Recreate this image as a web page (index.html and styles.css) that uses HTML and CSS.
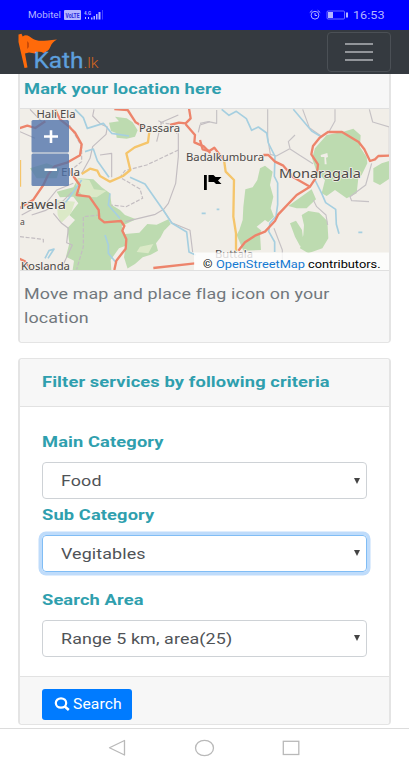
FILE: index.html
```html
<!DOCTYPE html>
<html lang="en">
<head>
<meta charset="utf-8">
<title>Kath.lk</title>
<link rel="stylesheet" href="styles.css">
</head>
<body>
<div class="screen">
  <div class="status">
    <svg width="409" height="30" viewBox="0 0 409 30">
      <g fill="#b4b5ff">
        <text x="28" y="18.2" font-size="8.8" textLength="33" lengthAdjust="spacingAndGlyphs">Mobitel</text>
        <rect x="64" y="10" width="17" height="10" rx="1"/>
        <text x="65.5" y="18" font-size="7" font-weight="700" fill="#2a28dc" textLength="14" lengthAdjust="spacingAndGlyphs">VoLTE</text>
        <text x="84" y="14.5" font-size="6" font-weight="700" textLength="7" lengthAdjust="spacingAndGlyphs">4.G</text>
        <path d="M85 17h1v2h-1zM88 17h1v2h-1zM91 17.5h1.500v2h-1.500zM93.500 16h1.500v3.500h-1.500zM96 14h1.500v5.500H96zM98.500 12h2v7.500h-2z"/>
        <path d="M102 10h1v9.500h-1z" opacity=".35"/>
        <text x="353" y="18.700" font-size="11" textLength="31.500" lengthAdjust="spacingAndGlyphs">16:53</text>
        <rect x="328" y="12" width="5" height="6"/>
        <rect x="346" y="12.500" width="2" height="5"/>
      </g>
      <g fill="none" stroke="#b4b5ff">
        <rect x="327" y="11" width="17.500" height="8" rx="1" stroke-opacity=".6"/>
        <circle cx="315" cy="15.200" r="3.900"/>
        <path d="M315 13v2.500h2M309.800 12.500l2.500-2.200M320.200 12.500l-2.500-2.200"/>
      </g>
    </svg>
  </div>
  <header class="navbar">
    <svg class="logo" width="80" height="43" viewBox="18 30 80 43">
      <path fill="#ff6a0a" d="M18.500 34.500l3-.7 1.200 2.700c4-3 7 .5 10.500 2.500 4.500 2.500 9 2 23.800.5-3.500 2-5.500 4-6.500 7-1.500 4-4 5-7 6.500-3-2-6-1.500-8.500.5l-6-1-4 1 2.500 14-3 .5-6-26z" transform="translate(0 0)"/>
      <path fill="#c94b08" d="M27 41l2 2v4l-2 2z"/>
      <text x="33.500" y="68" font-size="22.500" fill="#5d9fdd" stroke="#5d9fdd" stroke-width=".3" textLength="50" lengthAdjust="spacingAndGlyphs">Kath</text>
      <text x="83.500" y="68" font-size="14.500" font-weight="300" fill="#d3651f" textLength="15" lengthAdjust="spacingAndGlyphs">.lk</text>
    </svg>
    <button class="toggler" aria-label="Menu"><i></i><i></i><i></i></button>
  </header>
  <main>
    <section class="card map-card">
      <div class="map-head"><b class="wide">Mark your location here</b></div>
      <div class="map">
        <svg width="370" height="161" viewBox="20 109 370 161">
          <rect x="20" y="109" width="370" height="161" fill="#f1eee8"/>
          <g transform="translate(10 100) scale(.33333)" fill="none" stroke-linejoin="round">
            <path fill="#bddbb0" d="M205 235L250 238 275 262 300 280 305 315 330 330 345 345 378 358 335 378 345 402 388 398 412 372 440 374 475 358 482 372 462 392 452 412 438 430 444 452 422 464 398 472 375 492 345 510H188L192 482 168 470 178 430 172 385 195 360 178 345 205 310 190 290 150 292 140 275 190 262zM297 68L327 64 315 50 350 55 368 67 383 91 375 110 350 116 320 113 318 99 303 93zM60 205L110 190 150 205 140 235 80 235z"/>
            <path fill="#f1eee8" d="M302 480l25-35 20-8-5 35 12 38h-50z"/>
            <path fill="#dbe9c7" d="M198 235l40 5 14 28 38 4-30 20-40-2-20-25zM140 300l55 5-12 35-30 30-10-25zM390 440l40-8-15 28-35-4z"/>
            <g stroke="#c3bdc1" stroke-width="3.500">
              <path d="M252 28l-4 20 25 25 19 8-4 22-40 37-8 35-25 45M505 45l-50 22-10-5M505 100v70l-8 80-22 60-14 18-25 15-90 22M460 330l25 38 55 23 8 65M270 165l35-5v72M95 65L60 28M30 95l45 20M100 310L35 345M65 345l40-13 55-30 25-25M130 340l25 30 20 15-5 43 17 7-35 75M100 320l40-50 50-20M600 65l-30 10-5 22M455 65l-15 60"/>
              <path stroke-dasharray="12 5" d="M505 150l-95 45-65 17-15 20 60 35 8 28-50 25-45-5M270 345l-50 5 0 90-20 68M30 410l70 8 0 12M170 60l45 80 0 45-25 20M450 68l40 5 10 28"/>
            </g>
            <g stroke="#a6cfe0" stroke-width="5">
              <path d="M195 28l25 25 12 32 48-15 25 30 52 8M225 155l25-8 12 35 35 50M360 232l45 20 25 36 30 43 25 38 45 27 7 60 20 9M160 315l20-25 35-50M105 475l12-23 15-5-18 28M285 405l10 30 0 25 25 30M300 280l-5 35 35 40"/>
            </g>
            <path stroke="#f5c56b" stroke-width="7" d="M30 180v80M418 95L414 127 374 142 349 160 361 210 339 228 300 245 270 228 262 212 240 206 215 222"/>
            <g stroke="#ed846b" stroke-width="7">
              <path d="M27 85l25-8 24 7 30-20M135 28l15 30 25 20 20 20 20 35-5 33-37 21-40 12-18 24-15 32-30 44-42 26M177 210l32 45-9 30 38 5 28 40 2 25 15 12 50-4 10 15-6 14 12 26-2 28-28 36-6 28M313 27l40 3 24 37 25 15M480 75l27-7 20 2 15-15-5-30M527 73l28 32-2 22 28 12 20 20M430 504l125-14M25 475l20 9 20 27"/>
            </g>
          </g>
          <g transform="translate(200 100) scale(.33333)" fill="none" stroke-linejoin="round">
            <path fill="#bddbb0" d="M180 205L195 197 218 215 210 255 220 290 212 325 222 350 190 380 180 400 183 450 130 452 110 405 118 390 128 360 130 320 136 268 158 262 172 240zM345 145L380 105 430 95 460 86 482 106 480 141 500 171 502 190 485 225 475 235 470 280 440 295 405 270 380 288 365 280 375 240 350 215 336 175zM520 205L545 190 570 182V235L540 255 520 245zM265 318L335 268 348 298 320 325 290 325zM270 370L288 362 306 390 311 432 300 438 285 410zM305 345L325 333 357 338 382 363 385 415 367 445 325 460 300 445 310 405 312 375z"/>
            <path fill="#f1eee8" d="M362 165l20-6 2 12-6 2 2 20-6 0-1-22-10 0zM170 380l25-20 12 8-15 30z"/>
            <g stroke="#c6c2c5" stroke-width="3.500">
              <path d="M203 28v85l8 50 18 5 40-22 30 20 40 25M270 145l-5-20 20-20M405 28v35l-18 32M308 28l20 55 35 25M508 28l10 38 50 15v85M515 190l-18 65-47 35 5 12 52 3M0 70l25-5 25 5 0-40M340 300l10 20 28 25 5 30M222 385l25 65v60M470 505l50 5"/>
            </g>
            <g stroke="#a6cfe0" stroke-width="5">
              <path d="M65 28l22 18 22-12 30 22 16 35 20-10 25 18 5 30 20 40-2 60 10 20 0 65-5 35-18 20-4 25 18 32 0 30M345 240l20 40 12 28 30 20 2 45 8 28M280 28l55 65 25 15M5 340l12 0M475 397h12M50 328h8"/>
            </g>
            <path stroke="#f5c56b" stroke-width="7" d="M72 180L77 215 102 240 100 350 108 400V460"/>
            <g stroke="#ed846b" stroke-width="7">
              <path d="M0 120l8 28 20 5 15-10 15 20 15 18M190 165h15l20 20 25 12 30 35 50 28-40 25-55 58-10 20-30 32-30 12-30 20-20 25M330 260l20-30 4-37-20-30 5-25 20-25 25-17 42 0 50 30 17 22 17 35 15-5 10-10 48-2"/>
            </g>
          </g>
          <g class="places">
            <text x="36.500" y="117.500" font-size="10.500" textLength="39" lengthAdjust="spacingAndGlyphs">Hali Ela</text>
            <text x="139" y="131.500" font-size="10.500" textLength="41" lengthAdjust="spacingAndGlyphs">Passara</text>
            <text x="186" y="160.500" font-size="10.500" textLength="78" lengthAdjust="spacingAndGlyphs">Badalkumbura</text>
            <text x="61" y="176" font-size="10.500" textLength="19" lengthAdjust="spacingAndGlyphs">Ella</text>
            <text x="279" y="178" font-size="13" textLength="82" lengthAdjust="spacingAndGlyphs">Monaragala</text>
            <text x="20.500" y="208.500" font-size="12.500" textLength="45.500" lengthAdjust="spacingAndGlyphs">rawela</text>
            <text x="20" y="225" font-size="8.500">a</text>
            <text x="21" y="269.800" font-size="10" textLength="49" lengthAdjust="spacingAndGlyphs">Koslanda</text>
            <text x="215" y="258" font-size="10" textLength="38" lengthAdjust="spacingAndGlyphs">Buttala</text>
          </g>
          <path d="M204 175h2.800v15H204zM208.500 175h5l2 2 6 0-3.500 3.500 3.500 3.500h-5.500l-2-2h-5.500z"/>
          <rect x="31.500" y="120" width="37.500" height="32.500" rx="1.500" fill="#4e72aa" opacity=".78"/>
          <rect x="31.500" y="153.500" width="37.500" height="32.500" rx="1.500" fill="#4e72aa" opacity=".78"/>
          <path stroke="#fff" stroke-width="2.600" d="M44 136.500h14M51 130.300v12.600M44.500 169.700h12.500"/>
          <path fill="#fff" opacity=".8" d="M194 252.500h196V270H194z"/>
          <g font-size="11">
            <text x="203" y="267.500" textLength="9.500" lengthAdjust="spacingAndGlyphs">©</text>
            <text x="216" y="267.500" fill="#1479d2" textLength="89" lengthAdjust="spacingAndGlyphs">OpenStreetMap</text>
            <text x="308" y="267.500" textLength="72.500" lengthAdjust="spacingAndGlyphs">contributors.</text>
          </g>
        </svg>
      </div>
      <div class="map-foot"><span class="wide">Move map and place flag icon on your<br>location</span></div>
    </section>
    <section class="card filter">
      <div class="filter-head"><b class="wide">Filter services by following criteria</b></div>
      <div class="fields">
        <label><b class="wide">Main Category</b></label>
        <div class="select"><span class="wide">Food</span><i></i></div>
        <label class="second"><b class="wide">Sub Category</b></label>
        <div class="select focus"><span class="wide">Vegitables</span><i></i></div>
        <label class="third"><b class="wide">Search Area</b></label>
        <div class="select"><span class="wide">Range 5 km, area(25)</span><i></i></div>
      </div>
      <div class="filter-foot">
        <button class="search">
          <svg width="16" height="14" viewBox="0 0 16 14" fill="none" stroke="#fff" stroke-width="2.200"><ellipse cx="7" cy="6" rx="5.200" ry="4.700"/><path d="M10.500 9.300l4.300 3.600" stroke-width="2.600"/></svg>
          <span class="wide">Search</span>
        </button>
      </div>
    </section>
  </main>
  <nav class="system">
    <svg width="409" height="39" viewBox="0 729 409 39" fill="none" stroke="#b9b9b9" stroke-width="1.300">
      <path d="M124.500 740.500v14.500l-15-7.250z" stroke-linejoin="round"/>
      <ellipse cx="204.500" cy="748" rx="9" ry="7.700"/>
      <rect x="283.300" y="741.300" width="15.500" height="13.200"/>
    </svg>
  </nav>
</div>
</body>
</html>
```
FILE: styles.css
```css
* { box-sizing: border-box; }
body { margin: 0; background: #fff; font-family: Roboto, "Liberation Sans", sans-serif; font-size: 15.5px; overflow: hidden; }
svg { display: block; }
.screen { width: 409px; height: 768px; display: flex; flex-direction: column; }
.status { height: 30px; background: #00f; flex: none; }
.navbar { height: 43.5px; flex: none; background: #353a40; display: flex; justify-content: space-between; padding-right: 18px; padding-left: 18px; }
.logo { overflow: visible; }
.toggler { width: 64px; height: 40px; margin-top: 2px; padding: 0; background: none; border: 1px solid #4b5056; border-radius: 4px; display: flex; flex-direction: column; gap: 6px; align-items: center; justify-content: center; }
.toggler i { width: 28px; height: 2px; background: #92959a; }
main { flex: 1; padding: 0 18px; display: flex; flex-direction: column; gap: 15px; }
.card { width: 373px; border: 2px solid #e4e4e4; border-top-width: 1px; border-bottom-width: 1px; border-radius: 4px; background: #fff; overflow: hidden; flex: none; }
.wide { display: inline-block; transform: scaleX(1.153); transform-origin: left center; white-space: nowrap; letter-spacing: .1px; }
b.wide { color: #2f9fae; transform: scaleX(1.18); }
.map-card { height: 269px; border-top: 0; border-top-left-radius: 0; border-top-right-radius: 0; }
.map-head { height: 35.5px; background: #f7f7f7; border-bottom: 1px solid #e0e0e0; padding: 5px 4px 0; line-height: 20px; }
.map { height: 161px; overflow: hidden; }
.places { font-family: "Noto Sans", "Open Sans", sans-serif; fill: #4b4846; paint-order: stroke; stroke: #f4f1ec; stroke-width: 1.5px; }
.places text { stroke-linejoin: round; }
.map-foot { height: 73px; background: #f7f7f7; border-top: 1px solid #e0e0e0; color: #71777d; padding: 12px 4px; line-height: 23.5px; }
.filter { height: 367px; }
.filter-head { height: 48px; background: #f7f7f7; border-bottom: 1px solid #e2e2e2; padding-left: 22px; line-height: 47px; }
.fields { height: 269.5px; padding: 25px 22px 0; }
label { display: block; height: 30.5px; line-height: 20px; }
label.second { height: 29.5px; padding-top: 6px; line-height: 20px; margin-bottom: 6px; }
label.third { height: 30px; margin-top: 18px; }
.select { width: 325px; height: 37px; border: 1px solid #ced2d6; border-radius: 4px; padding: 0 6px 0 18px; display: flex; align-items: center; justify-content: space-between; color: #4f5357; }
.select .wide { padding-top: 1px; }
.select i { border: 3px solid transparent; border-top: 6px solid #444; border-bottom: 0; }
.focus { border-color: #80bdf5; box-shadow: 0 0 0 3.5px #bfdcfb; }
.filter-foot { height: 47.5px; background: #f7f7f7; border-top: 1px solid #e2e2e2; padding: 12px 22px; }
.search { width: 90px; height: 30.5px; border: 0; border-radius: 3px; background: #007bff; color: #fff; font: 14px Roboto, sans-serif; padding: 0 12px; display: flex; align-items: center; gap: 3px; }
.search .wide { transform: scaleX(1.12); }
.system { height: 40px; flex: none; background: #fff; border-top: 1px solid #dcdcdc; }
```
